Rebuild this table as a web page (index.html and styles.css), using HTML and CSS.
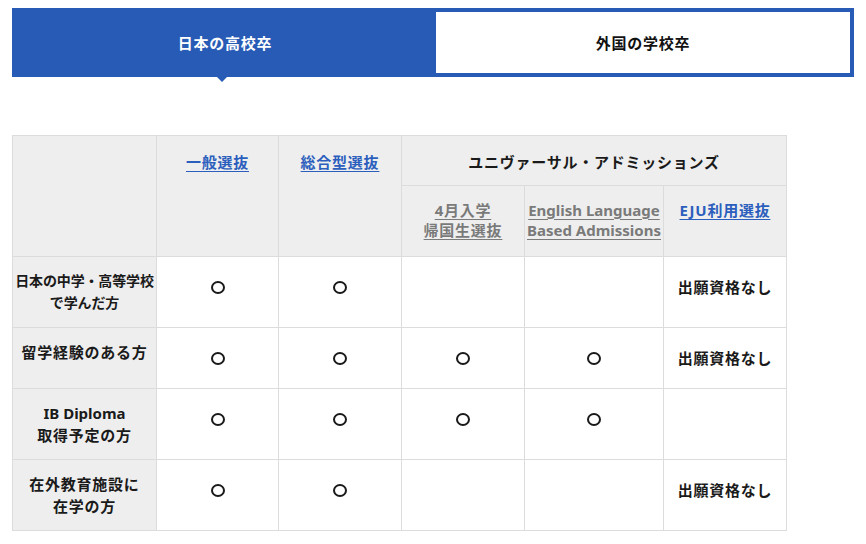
FILE: index.html
```html
<!DOCTYPE html>
<html lang="ja">
<head>
<meta charset="utf-8">
<title>出願資格</title>
<link rel="stylesheet" href="styles.css">
</head>
<body>
<div class="page">
  <nav class="tabs">
    <a class="tab tab--active" href="#">日本の高校卒</a>
    <a class="tab" href="#">外国の学校卒</a>
  </nav>

  <table class="matrix">
    <colgroup>
      <col class="c-label">
      <col class="c-a">
      <col class="c-b">
      <col class="c-c">
      <col class="c-d">
      <col class="c-e">
    </colgroup>
    <thead>
      <tr class="head-1">
        <th rowspan="2"></th>
        <th rowspan="2"><a class="link" href="#">一般選抜</a></th>
        <th rowspan="2"><a class="link" href="#">総合型選抜</a></th>
        <th colspan="3">ユニヴァーサル・アドミッションズ</th>
      </tr>
      <tr class="head-2">
        <th><a class="link link--muted" href="#">4月入学<br>帰国生選抜</a></th>
        <th><a class="link link--muted link--latin" href="#">English Language<br>Based Admissions</a></th>
        <th><a class="link" href="#">EJU利用選抜</a></th>
      </tr>
    </thead>
    <tbody>
      <tr>
        <th class="label label--tight">日本の中学・高等学校<br>で学んだ方</th>
        <td><span class="mark" role="img" aria-label="○"></span></td>
        <td><span class="mark" role="img" aria-label="○"></span></td>
        <td></td>
        <td></td>
        <td class="note">出願資格なし</td>
      </tr>
      <tr>
        <th class="label">留学経験のある方</th>
        <td><span class="mark" role="img" aria-label="○"></span></td>
        <td><span class="mark" role="img" aria-label="○"></span></td>
        <td><span class="mark" role="img" aria-label="○"></span></td>
        <td><span class="mark" role="img" aria-label="○"></span></td>
        <td class="note">出願資格なし</td>
      </tr>
      <tr>
        <th class="label"><span class="latin">IB Diploma</span><br>取得予定の方</th>
        <td><span class="mark" role="img" aria-label="○"></span></td>
        <td><span class="mark" role="img" aria-label="○"></span></td>
        <td><span class="mark" role="img" aria-label="○"></span></td>
        <td><span class="mark" role="img" aria-label="○"></span></td>
        <td></td>
      </tr>
      <tr>
        <th class="label">在外教育施設に<br>在学の方</th>
        <td><span class="mark" role="img" aria-label="○"></span></td>
        <td><span class="mark" role="img" aria-label="○"></span></td>
        <td></td>
        <td></td>
        <td class="note">出願資格なし</td>
      </tr>
    </tbody>
  </table>
</div>
</body>
</html>
```
FILE: styles.css
```css
* { box-sizing: border-box; }

html, body {
  margin: 0;
  padding: 0;
  background: #fff;
}

body {
  font-family: "Noto Sans", "Noto Sans CJK JP", sans-serif;
  color: #1a1a1a;
}

.page {
  padding: 8px 12px 0 12px;
}

/* ---------- tabs ---------- */
.tabs {
  display: flex;
  height: 69px;
}

.tab {
  position: relative;
  flex: 1 1 0;
  display: flex;
  align-items: center;
  justify-content: center;
  text-decoration: none;
  font-size: 15px;
  font-weight: 700;
  letter-spacing: 0.05em;
  color: #111;
  background: #fff;
  border: 4px solid #275bb6;
}

.tab--active {
  background: #275bb6;
  color: #fff;
  border: none;
  padding-left: 6px;
}

.tab--active::after {
  content: "";
  position: absolute;
  left: 50%;
  bottom: -5px;
  margin-left: -5px;
  border-left: 5px solid transparent;
  border-right: 5px solid transparent;
  border-top: 5px solid #275bb6;
}

/* ---------- table ---------- */
.matrix {
  margin-top: 58px;
  width: 774px;
  table-layout: fixed;
  border-collapse: collapse;
  font-size: 15px;
  font-weight: 700;
  letter-spacing: 0.05em;
}

.c-label { width: 144px; }
.c-a { width: 122px; }
.c-b { width: 123px; }
.c-c { width: 123px; }
.c-d { width: 139px; }
.c-e { width: 123px; }

.matrix th,
.matrix td {
  border: 1px solid #dcdcdc;
  text-align: center;
  vertical-align: top;
}

.matrix thead th {
  background: #eeeeee;
  padding: 16px 2px 13px;
  line-height: 20px;
  font-weight: 700;
}

.matrix thead .head-2 th {
  padding: 14px 2px 16px;
}

.matrix tbody td {
  padding: 13px 2px;
  line-height: 34px;
}

.matrix tbody .label {
  background: #eeeeee;
  padding: 13px 0;
  line-height: 22px;
  font-weight: 700;
}

.matrix tbody .label--tight {
  letter-spacing: -0.01em;
  font-size: 14px;
  white-space: nowrap;
}

.latin {
  letter-spacing: 0;
}

.link {
  color: #2c5fbd;
  text-decoration: underline;
  text-underline-offset: 3px;
}

.link--muted {
  color: #7a7a7a;
}

.link--latin {
  letter-spacing: 0;
}

.mark {
  display: inline-block;
  width: 14px;
  height: 13px;
  border: 2px solid #1a1a1a;
  border-radius: 50%;
  vertical-align: middle;
  position: relative;
  top: -1px;
}

.note {
  font-weight: 700;
}
```
